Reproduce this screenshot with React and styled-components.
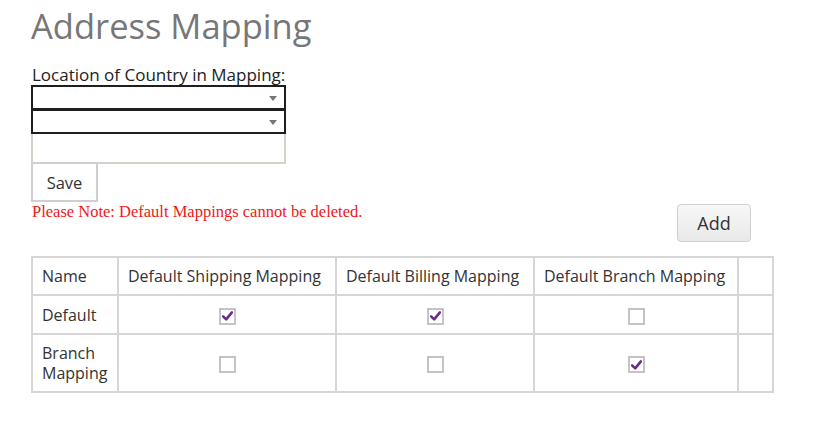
import React from 'react'
import styled, { createGlobalStyle } from 'styled-components'

const GlobalStyle = createGlobalStyle`
    body {
        margin: 0;
        background: #fff;
        font-family: 'Open Sans', 'Noto Sans', sans-serif;
        color: #333;
    }
`;

const rows = [
    { name: 'Default', shipping: true, billing: true, branch: false },
    { name: 'Branch Mapping', shipping: false, billing: false, branch: true },
];

const Check = ({ checked }) => (
    <CheckBox>
        {checked && (
            <svg width="11" height="10" viewBox="0 0 10 9">
                <path d="M1 4.8 L3.8 7.6 L9 1.2" fill="none" stroke="#6a2c8c" strokeWidth="2.3" strokeLinecap="round" strokeLinejoin="round" />
            </svg>
        )}
    </CheckBox>
);

export default function App() {
    return (
        <>
            <GlobalStyle />
            <Page>
                <Title>Address Mapping</Title>
                <Label>Location of Country in Mapping:</Label>
                <Select />
                <Select />
                <TextBox />
                <SaveButton>Save</SaveButton>
                <NoteRow>
                    <Note>Please Note: Default Mappings cannot be deleted.</Note>
                    <AddButton>Add</AddButton>
                </NoteRow>
                <Table>
                    <colgroup>
                        <col style={{ width: 86 }} />
                        <col style={{ width: 218 }} />
                        <col style={{ width: 198 }} />
                        <col style={{ width: 204 }} />
                        <col style={{ width: 35 }} />
                    </colgroup>
                    <thead>
                        <tr>
                            <Th>Name</Th>
                            <Th>Default Shipping Mapping</Th>
                            <Th>Default Billing Mapping</Th>
                            <Th>Default Branch Mapping</Th>
                            <Th />
                        </tr>
                    </thead>
                    <tbody>
                        {rows.map((r) => (
                            <tr key={r.name}>
                                <Td>{r.name}</Td>
                                <Td $center><Check checked={r.shipping} /></Td>
                                <Td $center><Check checked={r.billing} /></Td>
                                <Td $center><Check checked={r.branch} /></Td>
                                <Td />
                            </tr>
                        ))}
                    </tbody>
                </Table>
            </Page>
        </>
    );
}

const Page = styled.div`
    padding: 3px 0 0 31px;
    width: 741px;
`;

const Title = styled.h1`
    margin: 0 0 15px 0;
    font-size: 34.5px;
    font-weight: 400;
    color: #777;
    line-height: 46px;
`;

const Label = styled.div`
    font-size: 17px;
    line-height: 22px;
    margin-left: 1px;
    color: #222;
`;

const Select = styled.div`
    position: relative;
    box-sizing: border-box;
    width: 255px;
    height: 25px;
    border: 2px solid #1e1e1e;
    margin-top: -1px;

    &::after {
        content: '';
        position: absolute;
        right: 7px;
        top: 9px;
        border-left: 4px solid transparent;
        border-right: 4px solid transparent;
        border-top: 5px solid #777;
    }
`;

const TextBox = styled.div`
    box-sizing: border-box;
    width: 255px;
    height: 30px;
    border: 2px solid #d4d1ca;
    border-top: none;
`;

const SaveButton = styled.button`
    box-sizing: border-box;
    display: block;
    width: 67px;
    height: 40px;
    margin-top: -2px;
    background: #fff;
    border: 2px solid #cfcfcf;
    font-family: 'Open Sans', sans-serif;
    font-size: 16.5px;
    color: #333;
    padding: 0;
`;

const NoteRow = styled.div`
    display: flex;
    justify-content: space-between;
    align-items: flex-start;
    padding-right: 21px;
    margin-bottom: 14px;
`;

const Note = styled.div`
    font-family: 'Liberation Serif', serif;
    font-size: 16.5px;
    line-height: 18px;
    color: #f01818;
    margin-top: 1px;
    margin-left: 1px;
`;

const AddButton = styled.button`
    box-sizing: border-box;
    width: 74px;
    height: 38px;
    margin-top: 2px;
    border: 1px solid #cfcfcf;
    border-radius: 4px;
    background: linear-gradient(#f7f7f7, #e9e9e9);
    font-family: 'Open Sans', sans-serif;
    font-size: 18px;
    color: #333;
    padding: 0;
`;

const Table = styled.table`
    border-collapse: collapse;
    table-layout: fixed;
    width: 741px;
    border: 2px solid #d6d6d6;
    font-size: 16px;
    color: #333;
`;

const Th = styled.th`
    border: 2px solid #d6d6d6;
    font-weight: 400;
    text-align: left;
    padding: 8px 9px;
    line-height: 20px;
    height: 20px;
`;

const Td = styled.td`
    border: 2px solid #d6d6d6;
    padding: 8px 9px;
    line-height: 20px;
    height: 21px;
    text-align: ${(p) => (p.$center ? 'center' : 'left')};
    vertical-align: middle;
`;

const CheckBox = styled.span`
    box-sizing: border-box;
    display: inline-flex;
    align-items: center;
    justify-content: center;
    width: 17px;
    height: 17px;
    border: 2px solid #c4c4c4;
    background: #fff;
    vertical-align: middle;
`;
